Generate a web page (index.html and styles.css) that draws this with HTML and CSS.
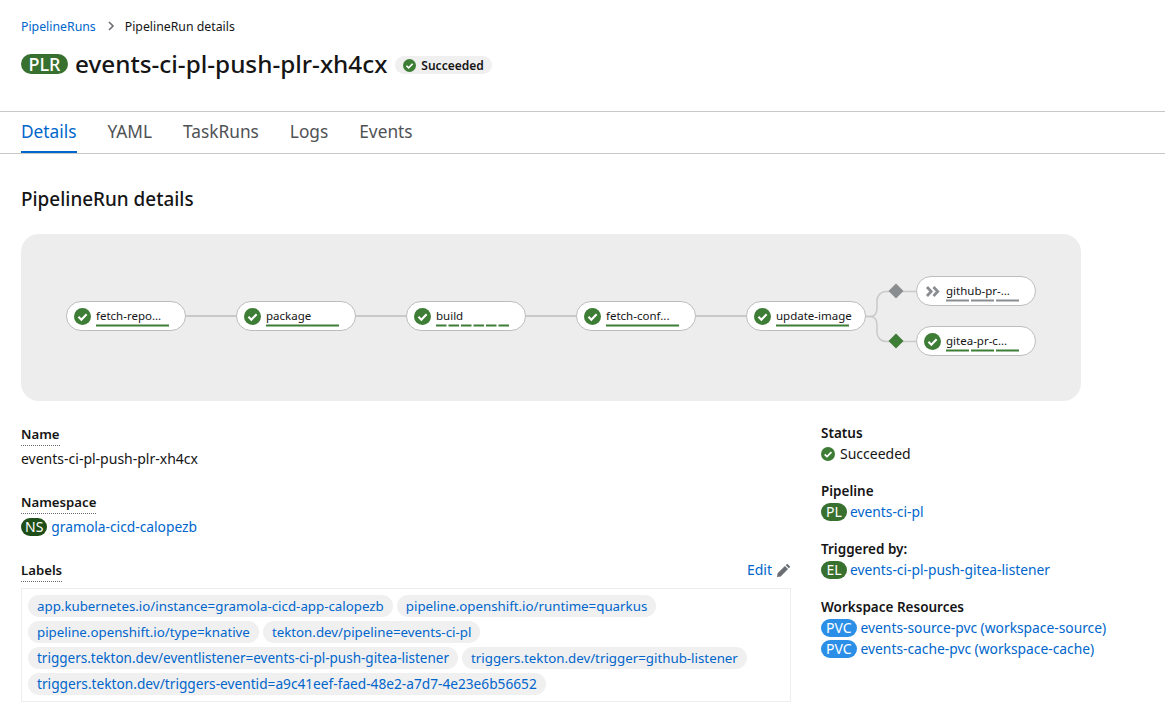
FILE: index.html
```html
<!DOCTYPE html>
<html lang="en">
<head>
    <meta charset="UTF-8">
    <meta name="viewport" content="width=device-width, initial-scale=1.0">
    <title>PipelineRun details</title>
    <link rel="stylesheet" href="styles.css">
</head>
<body>
    <header class="page-head">
        <nav class="breadcrumb">
            <a href="#">PipelineRuns</a>
            <svg class="crumb-sep" width="7" height="10" viewBox="0 0 7 10"><path d="M1 1l4 4-4 4" fill="none" stroke="#6a6e73" stroke-width="1.6"/></svg>
            <span>PipelineRun details</span>
        </nav>
        <div class="title-row">
            <span class="res-badge res-badge-lg green">PLR</span>
            <h1>events-ci-pl-push-plr-xh4cx</h1>
            <span class="status-pill">
                <svg class="check" width="13" height="13" viewBox="0 0 16 16"><use href="#check-circle"/></svg>
                Succeeded
            </span>
        </div>
    </header>

    <ul class="tabs">
        <li class="active">Details</li>
        <li>YAML</li>
        <li>TaskRuns</li>
        <li>Logs</li>
        <li>Events</li>
    </ul>

    <main class="content">
        <h2>PipelineRun details</h2>

        <div class="graph">
            <svg width="1060" height="167" viewBox="0 0 1060 167">
                <defs>
                    <symbol id="check-circle" viewBox="0 0 16 16">
                        <circle cx="8" cy="8" r="8" fill="#3e7d36"/>
                        <path d="M4.200 8.300l2.700 2.700 5-5.200" fill="none" stroke="#fff" stroke-width="2"/>
                    </symbol>
                </defs>
                <g fill="none" stroke="#c9c9c9" stroke-width="2">
                    <path d="M165 82h50M335 82h50M505 82h50M675 82h50"/>
                    <path d="M845 82.500h4c6 0 7-5 7-9v-7c0-5 4-9 9-9h30" stroke-width="1.500"/>
                    <path d="M845 82.500h4c6 0 7 5 7 9v7c0 5 4 9 9 9h30" stroke-width="1.500"/>
                </g>

                <g class="node" transform="translate(45 67)">
                    <rect x="0.500" y="0.500" width="119" height="29" rx="14.500"/>
                    <use href="#check-circle" x="8" y="7" width="17" height="17"/>
                    <text x="30" y="19">fetch-repo...</text>
                    <path class="bar" d="M30 24.500h73"/>
                </g>
                <g class="node" transform="translate(215 67)">
                    <rect x="0.500" y="0.500" width="119" height="29" rx="14.500"/>
                    <use href="#check-circle" x="8" y="7" width="17" height="17"/>
                    <text x="30" y="19">package</text>
                    <path class="bar" d="M30 24.500h73"/>
                </g>
                <g class="node" transform="translate(385 67)">
                    <rect x="0.500" y="0.500" width="119" height="29" rx="14.500"/>
                    <use href="#check-circle" x="8" y="7" width="17" height="17"/>
                    <text x="30" y="19">build</text>
                    <path class="bar" d="M30 24.500h10.500M42.500 24.500h10.500M55 24.500h10.500M67.500 24.500h10.500M80 24.500h10.500M92.500 24.500h10.500"/>
                </g>
                <g class="node" transform="translate(555 67)">
                    <rect x="0.500" y="0.500" width="119" height="29" rx="14.500"/>
                    <use href="#check-circle" x="8" y="7" width="17" height="17"/>
                    <text x="30" y="19">fetch-conf...</text>
                    <path class="bar" d="M30 24.500h73"/>
                </g>
                <g class="node" transform="translate(725 67)">
                    <rect x="0.500" y="0.500" width="119" height="29" rx="14.500"/>
                    <use href="#check-circle" x="8" y="7" width="17" height="17"/>
                    <text x="30" y="19">update-image</text>
                    <path class="bar" d="M30 24.500h73"/>
                </g>

                <path d="M875 49.500l7.500 7.500-7.500 7.500-7.500-7.500z" fill="#8a8d90"/>
                <path d="M875 99.500l7.500 7.500-7.500 7.500-7.500-7.500z" fill="#3e7d36"/>

                <g class="node" transform="translate(895 42)">
                    <rect x="0.500" y="0.500" width="119" height="29" rx="14.500"/>
                    <path d="M11 11l4.200 4.500-4.200 4.500M17.500 11l4.200 4.500-4.200 4.500" fill="none" stroke="#8a8d90" stroke-width="2.800"/>
                    <text x="30" y="19">github-pr-...</text>
                    <path class="bar grey" d="M30 24.500h23M55 24.500h23M80 24.500h23"/>
                </g>
                <g class="node" transform="translate(895 92)">
                    <rect x="0.500" y="0.500" width="119" height="29" rx="14.500"/>
                    <use href="#check-circle" x="8" y="7" width="17" height="17"/>
                    <text x="30" y="19">gitea-pr-c...</text>
                    <path class="bar" d="M30 24.500h23M55 24.500h23M80 24.500h23"/>
                </g>
            </svg>
        </div>

        <div class="details">
            <div class="details-left">
                <dl>
                    <dt><span class="dotted">Name</span></dt>
                    <dd>events-ci-pl-push-plr-xh4cx</dd>
                    <dt><span class="dotted">Namespace</span></dt>
                    <dd><span class="res-badge dark">NS</span><a href="#">gramola-cicd-calopezb</a></dd>
                </dl>
                <div class="labels-head">
                    <span class="dotted">Labels</span>
                    <a href="#" class="edit">Edit
                        <svg width="14" height="14" viewBox="0 0 14 14"><path d="M10.200.700l3.100 3.100-1.500 1.500-3.100-3.100zM7.900 3l3.100 3.100-7.300 7.300-3.700.600.600-3.700z" fill="#6a6e73"/></svg>
                    </a>
                </div>
                <div class="labels">
                    <a href="#" class="label">app.kubernetes.io/instance=gramola-cicd-app-calopezb</a>
                    <a href="#" class="label">pipeline.openshift.io/runtime=quarkus</a>
                    <a href="#" class="label">pipeline.openshift.io/type=knative</a>
                    <a href="#" class="label">tekton.dev/pipeline=events-ci-pl</a>
                    <a href="#" class="label label-long">triggers.tekton.dev/eventlistener=events-ci-pl-push-gitea-listener</a>
                    <a href="#" class="label">triggers.tekton.dev/trigger=github-listener</a>
                    <a href="#" class="label label-id">triggers.tekton.dev/triggers-eventid=a9c41eef-faed-48e2-a7d7-4e23e6b56652</a>
                </div>
            </div>
            <dl class="details-right">
                <dt>Status</dt>
                <dd>
                    <svg class="check" width="14" height="14" viewBox="0 0 16 16"><use href="#check-circle"/></svg>
                    Succeeded
                </dd>
                <dt>Pipeline</dt>
                <dd><span class="res-badge green">PL</span><a href="#">events-ci-pl</a></dd>
                <dt>Triggered by:</dt>
                <dd><span class="res-badge green">EL</span><a href="#">events-ci-pl-push-gitea-listener</a></dd>
                <dt>Workspace Resources</dt>
                <dd class="tight"><span class="res-badge blue">PVC</span><a href="#">events-source-pvc (workspace-source)</a></dd>
                <dd class="tight"><span class="res-badge blue">PVC</span><a href="#">events-cache-pvc (workspace-cache)</a></dd>
            </dl>
        </div>
    </main>
</body>
</html>
```

FILE: styles.css
```css
* {
    box-sizing: border-box;
}

html, body {
    height: 716px;
    overflow: hidden;
}

body {
    margin: 0;
    font-family: "Noto Sans", "Open Sans", sans-serif;
    font-size: 14px;
    color: #151515;
    background-color: #fff;
}

a {
    color: #0066cc;
    text-decoration: none;
}

.page-head {
    height: 112px;
    padding: 17px 21px 0;
    border-bottom: 1px solid #c8c8c8;
}

.breadcrumb {
    display: flex;
    align-items: center;
    height: 18px;
    font-size: 12.300px;
}

.crumb-sep {
    margin: 0 10px 0 12px;
}

.title-row {
    display: flex;
    align-items: center;
    height: 40px;
    margin-top: 9px;
}

h1 {
    margin: 0 8px 0 7px;
    font-size: 24.300px;
    font-weight: 500;
    line-height: 40px;
}

.status-pill {
    display: inline-flex;
    align-items: center;
    gap: 5px;
    height: 18px;
    margin-top: 2px;
    padding: 0 8px;
    border-radius: 9px;
    background-color: #f0f0f0;
    font-size: 12px;
    font-weight: 600;
}

.res-badge {
    display: inline-block;
    min-width: 26px;
    height: 18px;
    margin-right: 4px;
    padding: 0 4px;
    border-radius: 9px;
    color: #fff;
    font-size: 14px;
    line-height: 18px;
    text-align: center;
}

.green {
    margin-right: 3px;
    background-color: #38702f;
}

.dark {
    background-color: #1e4f18;
}

.blue {
    padding: 0 5px;
    background-color: #2b8fe8;
}

.res-badge-lg {
    width: 47px;
    height: 20px;
    margin: 0;
    padding: 0;
    border-radius: 10px;
    font-size: 18px;
    font-weight: 500;
    line-height: 20px;
}

.tabs {
    display: flex;
    gap: 31px;
    height: 42px;
    margin: 0;
    padding: 0 21px;
    list-style-type: none;
    border-bottom: 1px solid #c8c8c8;
    font-size: 17.300px;
    line-height: 39px;
    color: #4f5255;
}

.tabs li {
    height: 41px;
}

.tabs .active {
    color: #0066cc;
    border-bottom: 2px solid #0066cc;
}

.content {
    padding: 0 21px;
}

h2 {
    margin: 32px 0 21px;
    font-size: 18.900px;
    font-weight: 500;
    line-height: 27px;
}

.graph {
    width: 1060px;
    height: 167px;
    border-radius: 18px;
    background-color: #ededed;
}

.graph svg {
    display: block;
}

.node rect {
    fill: #fff;
    stroke: #bdbdbd;
}

.node text {
    font-size: 11.500px;
    fill: #151515;
}

.bar {
    fill: none;
    stroke: #3e7d36;
    stroke-width: 2;
}

.bar.grey {
    stroke: #8a8d90;
}

.details {
    display: flex;
    gap: 30px;
    margin-top: 24px;
}

.details-left {
    width: 770px;
}

dl {
    margin: 0;
}

dt {
    font-size: 13.200px;
    font-weight: 600;
    line-height: 18px;
}

dd {
    display: flex;
    align-items: center;
    margin: 7px 0 25px;
    line-height: 18px;
}

dd a {
    font-size: 13.800px;
}

.details-right {
    margin-top: -1px;
}

.details-right dt {
    font-size: 13.500px;
}

.details-right dd {
    margin: 3px 0 19px;
}

.details-right dd.tight {
    margin: 3px 0 0;
}

.details-right .check {
    margin-right: 5px;
}

.dotted {
    padding-bottom: 2px;
    border-bottom: 1px dotted #6a6e73;
    font-size: 13.200px;
    font-weight: 600;
}

.labels-head {
    display: flex;
    justify-content: space-between;
    line-height: 18px;
}

.edit {
    display: flex;
    align-items: center;
    gap: 5px;
    margin-top: -3px;
}

.labels {
    display: flex;
    flex-wrap: wrap;
    align-content: flex-start;
    gap: 4px;
    height: 114px;
    margin-top: 6px;
    padding: 6px;
    border: 1px solid #ededed;
}

.label {
    height: 22px;
    padding: 0 9px;
    border-radius: 11px;
    background-color: #f0f0f0;
    font-size: 13.300px;
    line-height: 22px;
}

.label-long {
    font-size: 13.500px;
}

.label-id {
    font-size: 13.700px;
}
```
